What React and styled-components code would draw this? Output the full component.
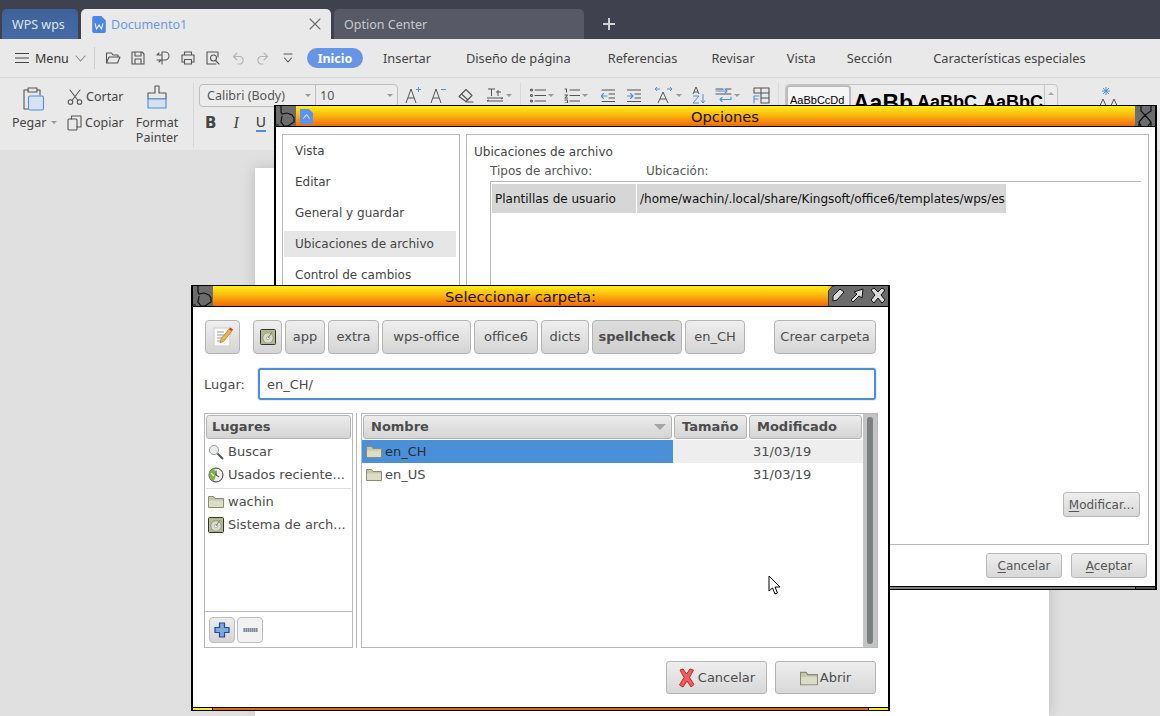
import React from "react";
import styled, { createGlobalStyle } from "styled-components";

const UI = `"Noto Sans", "DejaVu Sans", sans-serif`;
const GTK = `"DejaVu Sans", sans-serif`;

const Global = createGlobalStyle`
  html, body { margin: 0; padding: 0; background: #e0e0e0; }
  body { width: 1160px; height: 716px; overflow: hidden; font-family: ${GTK}; }
  * { box-sizing: border-box; }
`;

const Desktop = styled.div`
  position: relative; width: 1160px; height: 716px; overflow: hidden;
  display: flex; flex-direction: column; background: #e0e0e0;
`;

/* ---------- tab bar ---------- */
const TabBar = styled.div`
  height: 39px; flex: none; background: #3f424e; display: flex; align-items: flex-end;
  padding-left: 2px; gap: 3px; font-family: ${UI}; font-size: 12.5px;
`;
const Tab = styled.div`
  height: 30px; width: ${p => p.$w}px; border-radius: 5px 5px 0 0; display: flex; align-items: center;
  padding: 0 ${p => p.$pad || 10}px; gap: 5px; flex: none;
  background: ${p => p.$bg}; color: ${p => p.$color};
`;
const TabClose = styled.span`margin-left: auto; display: flex; margin-right: -1px;`;
const NewTab = styled.div`margin: 0 0 7px 15px; height: 16px; display: flex; align-items: center;`;

/* ---------- menu row ---------- */
const MenuRow = styled.div`
  height: 39px; flex: none; background: #e9e9e9; border-bottom: 1px solid #dcdcdc;
  display: flex; align-items: center; padding-left: 15px; font-family: ${UI}; font-size: 12.8px; color: #444;
`;
const MenuLabel = styled.span`margin-left: 6px; color: #333; width: 34px; font-size: 12.5px;`;
const ChevronSlot = styled.span`display: flex; margin-left: 6px;`;
const VSep = styled.div`
  width: 1px; height: ${p => p.$h}px; background: #cfcfcf; flex: none; margin: 0 ${p => p.$mr ?? 10}px 0 ${p => p.$ml ?? 8}px;
`;
const QuickIcon = styled.span`display: flex; width: 16px; justify-content: center; margin-right: ${p => p.$mr ?? 9}px; flex: none;`;
const Pill = styled.div`
  width: 56px; height: 20px; border-radius: 10px; background: #6695e6; color: #fff; font-weight: 700; font-size: 12.5px;
  display: flex; align-items: center; justify-content: center; margin: 0 20px 0 ${p => p.$ml}px; flex: none;
`;
const MenuTab = styled.span`margin-right: ${p => p.$mr}px; white-space: nowrap; flex: none;`;

/* ---------- ribbon ---------- */
const Ribbon = styled.div`
  height: 72px; flex: none; background: #e9e9e9; display: flex; align-items: flex-start;
  padding: 6px 0 0 0; font-family: ${UI}; font-size: 12.5px; color: #444;
`;
const PasteGroup = styled.div`
  width: 67px; padding-left: 12px; display: flex; flex-direction: column; align-items: flex-start; flex: none;
`;
const PasteIcon = styled.div`margin: 2px 0 0 9px; height: 26px;`;
const PasteLabel = styled.div`display: flex; align-items: center; gap: 5px; margin-top: 2px;`;
const Caret = styled.span`
  width: 0; height: 0; border-left: 3px solid transparent; border-right: 3px solid transparent;
  border-top: 3px solid #999; flex: none;
`;
const ClipGroup = styled.div`
  width: 68px; display: flex; flex-direction: column; gap: 9px; padding-top: 4px; flex: none;
`;
const ClipRow = styled.div`display: flex; align-items: center; gap: 3px; height: 17px;`;
const PainterGroup = styled.div`
  width: 44px; display: flex; flex-direction: column; align-items: center; line-height: 15px; text-align: center; flex: none;
`;
const PainterIcon = styled.div`height: 30px; margin-top: 1px;`;
const RibbonSep = styled.div`
  width: 1px; height: 64px; margin: -1px ${p => p.$mr ?? 5}px 0 ${p => p.$ml ?? 14}px; background: #d8d8d8; flex: none; align-self: flex-start;
`;
const FontGroup = styled.div`display: flex; flex-direction: column; gap: 6px; flex: none;`;
const FontTop = styled.div`display: flex; align-items: flex-start; height: 22px;`;
const Combo = styled.div`
  width: 199px; height: 23px; border: 1px solid #bdbdbd; border-radius: 4px; background: #ececec;
  display: grid; grid-template-columns: 115px 1fr; margin-right: 7px; color: #555;
`;
const ComboPart = styled.div`
  display: flex; align-items: center; justify-content: space-between; padding: 0 4px 0 7px;
  & + & { border-left: 1px solid #bdbdbd; padding-left: 4px; }
`;
const ToolIcon = styled.span`display: flex; align-items: center; gap: 2px; height: 22px; margin-right: ${p => p.$mr ?? 10}px; flex: none;`;
const FormatRow = styled.div`display: flex; align-items: center; gap: 14px; padding-left: 6px; height: 22px; color: #444;`;
const BoldB = styled.span`font: 700 15px ${GTK}; color: #444;`;
const ItalicI = styled.span`font: italic 400 16px "Liberation Serif", serif; color: #444; padding: 0 3px;`;
const UnderU = styled.span`font: 400 14px ${GTK}; color: #444; border-bottom: 2px solid #4d8fe0; line-height: 15px;`;
const ParaGroup = styled.div`display: flex; align-items: center; height: 22px; margin-left: 3px; flex: none;`;
const StylesBox = styled.div`
  width: 273px; height: 46px; border: 1px solid #c5c5c5; border-radius: 4px;
  display: flex; align-items: flex-start; flex: none; background: #ececec; color: #000;
`;
const StyleChip = styled.div`
  width: 65px; height: 40px; background: #f6f6f6; border: 2px solid #bdbdbd; border-radius: 4px; flex: none;
  font: 11px "Liberation Sans", sans-serif; padding: 7px 0 0 2px; white-space: nowrap;
`;
const StyleBig = styled.div`
  flex: none; font: 700 ${p => p.$s}px "Liberation Sans", sans-serif; margin: ${p => p.$t}px 0 0 ${p => p.$l}px;
  width: ${p => p.$w}px; white-space: nowrap; line-height: 1.1;
`;
const StyleScroll = styled.div`
  margin-left: auto; width: 13px; height: 21px; border-left: 1px solid #c5c5c5; border-bottom: 1px solid #c5c5c5; display: flex; justify-content: center; padding-top: 7px; flex: none;
`;
const UpCaret = styled(Caret)`border-top: 0; border-bottom: 3px solid #aaa;`;
const Sparkle = styled.div`margin: 2px 0 0 40px; flex: none;`;

/* ---------- document canvas ---------- */
const Canvas = styled.div`flex: 1; display: flex; padding: 18px 0 0 255px; background: #e0e0e0; min-height: 0;`;
const Page = styled.div`width: 794px; background: #fff; box-shadow: 0 0 14px rgba(0,0,0,.16);`;

/* ---------- window decorations ---------- */
const Win = styled.div`
  position: absolute; left: ${p => p.$x}px; top: ${p => p.$y}px; width: ${p => p.$w}px; height: ${p => p.$h}px;
  background: #fff; border: 1px solid #000; border-left-width: 2px; display: flex; flex-direction: column;
  border-right-width: 2px; font-family: ${GTK}; color: #4c4c4c; font-size: 13px;
`;
const TitleBar = styled.div`
  height: 21px; flex: none; border-bottom: 1px solid #000;
  background: linear-gradient(#fff018 0%, #fbb80f 45%, #f06a0a 100%);
  display: flex; align-items: center; position: relative; color: #201000; font-size: 14.7px;
`;
const TitleText = styled.div`
  position: absolute; inset: 0; display: flex; align-items: center; justify-content: center;
  padding-left: ${p => p.$pl || 0}px; padding-right: ${p => p.$pr || 0}px; padding-top: 1px;
`;
const Deco = styled.div`
  width: ${p => p.$w}px; height: 20px; background: #6c6c6c; flex: none; display: flex; position: relative;
  margin-left: ${p => (p.$right ? "auto" : "0")};
`;
const AppBadge = styled.span`margin-left: 4px; display: flex; position: relative;`;
const WinBottom = styled.div`
  height: 3px; flex: none; border-top: 1px solid #000; background: ${p => p.$bg};
  display: flex; justify-content: space-between;
`;
const BottomCap = styled.div`width: 20px; height: 2px; background: ${p => p.$bg}; border-right: ${p => p.$r ? "1px solid #000" : "none"}; border-left: ${p => p.$r ? "none" : "1px solid #000"};`;

/* ---------- Opciones window ---------- */
const OptBody = styled.div`flex: 1; display: flex; flex-direction: column; padding: 7px 6px 0 6px; min-height: 0;`;
const OptMain = styled.div`height: 411px; display: grid; grid-template-columns: 178px 1fr; gap: 6px; flex: none;`;
const OptList = styled.div`border: 1px solid #b8b8b8; padding: 3px 1px 0; display: flex; flex-direction: column; gap: 5px; font-size: 12px;`;
const OptItem = styled.div`
  height: 26px; flex: none; display: flex; align-items: center; padding-left: 11px; margin-right: 2px; color: #444;
  background: ${p => (p.$on ? "#e6e6e6" : "transparent")};
`;
const OptPane = styled.div`border: 1px solid #b8b8b8; padding: 9px 7px 0 7px; display: flex; flex-direction: column; font-size: 12px; color: #444;`;
const OptHeading = styled.div`height: 16px; line-height: 16px;`;
const OptTable = styled.div`margin-left: 16px; flex: 1; display: flex; flex-direction: column;`;
const OptHead = styled.div`
  display: grid; grid-template-columns: 156px 1fr; height: 22px; padding-top: 4px; line-height: 14px; border-bottom: 1px solid #b8b8b8; color: #555;
  flex: none;
`;
const OptRows = styled.div`flex: 1; border-left: 1px solid #b8b8b8; padding: 2px 0 0 1px; display: flex; flex-direction: column;`;
const OptRow = styled.div`display: flex; gap: 1px; height: 29px; color: #111;`;
const OptCell = styled.div`
  width: ${p => p.$w}px; background: #d6d6d6; display: flex; align-items: center; padding-left: ${p => p.$p}px; white-space: nowrap; overflow: hidden;
`;
const OptModify = styled.div`margin: auto 1px 27px auto;`;
const OptFooter = styled.div`display: flex; justify-content: flex-end; gap: 9px; padding: 8px 2px 0 0;`;
const SmallBtn = styled.div`
  width: ${p => p.$w}px; height: 25px; border: 1px solid #b8b8b8; border-radius: 3px; font-size: 12px; color: #555;
  background: linear-gradient(#eeeeee, #d8d8d8); display: flex; align-items: center; justify-content: center;
  u { text-underline-offset: 2px; }
`;

/* ---------- select folder dialog ---------- */
const DlgBody = styled.div`flex: 1; display: flex; flex-direction: column; padding: 13px 12px 0 12px; min-height: 0;`;
const PathBar = styled.div`display: flex; height: 34px; flex: none;`;
const GBtn = styled.div`
  width: ${p => p.$w}px; height: 34px; flex: none; margin-right: ${p => p.$mr ?? 3}px;
  border: 1px solid #b4b4b4; border-radius: 4px; display: flex; align-items: center; justify-content: center; padding-bottom: 1px;
  background: ${p => (p.$active ? "linear-gradient(#dcdcdc,#cfcfcf)" : "linear-gradient(#efefef,#d4d4d4)")};
  font-weight: ${p => (p.$active ? 700 : 400)}; color: #4c4c4c;
`;
const PlaceRow = styled.div`display: flex; align-items: center; margin-top: 14px; height: 32px; flex: none;`;
const PlaceLabel = styled.div`width: 53px; margin-left: -1px; margin-right: 1px;`;
const PlaceInput = styled.div`
  width: 618px; height: 32px; border: 2px solid #4a90d9; border-radius: 3px; background: #fff; display: flex; align-items: center; padding-left: 7px; box-shadow: 0 0 0 1px #e8edf3;
`;
const Paned = styled.div`display: flex; margin: 13px 0 0 -1px; height: 235px; flex: none;`;
const Places = styled.div`width: 149px; border: 1px solid #b8b8b8; display: flex; flex-direction: column; padding: 1px; flex: none;`;
const Gutter = styled.div`width: 8px; flex: none; position: relative; &::after { content: ""; position: absolute; left: 3px; top: 0; bottom: 0; width: 1px; background: #b8b8b8; }`;
const Files = styled.div`
  width: 517px; border: 1px solid #b8b8b8; padding-top: 1px; display: grid; grid-template-columns: 1fr 14px; flex: none; min-height: 0;
`;
const ColHeadBtn = styled.div`
  height: 24px; flex: ${p => (p.$w ? `0 0 ${p.$w}px` : "1")}; border: 1px solid #b4b4b4; border-radius: 3px;
  background: linear-gradient(#ececec,#d4d4d4); font-weight: 700; display: flex; align-items: center; justify-content: space-between;
  padding: 0 7px 1px ${p => p.$pl ?? 7}px; color: #4c4c4c;
`;
const PlacesHead = styled(ColHeadBtn)`flex: 0 0 24px;`;
const PlaceRowItem = styled.div`display: flex; align-items: center; height: 23px; gap: 4px; padding-left: 2px; white-space: nowrap; overflow: hidden;`;
const PlaceDivider = styled.div`height: 1px; background: #dedede; margin: 2px 0 0; flex: none;`;
const PlaceList = styled.div`display: flex; flex-direction: column; margin-top: 1px; flex: 1;`;
const PlaceGroup = styled.div`margin-top: ${p => p.$t || 0}px; flex: none;`;
const PlaceTools = styled.div`
  height: 36px; flex: none; border-top: 1px solid #b8b8b8; margin: 0 -1px -1px; display: flex; align-items: center; gap: 2px; padding-left: 4px;
`;
const MiniBtn = styled.div`
  width: 26px; height: 26px; border: 1px solid #bcbcbc; border-radius: 4px; display: flex; align-items: center; justify-content: center;
  background: ${p => (p.$flat ? "#f2f2f2" : "linear-gradient(#ececec,#d4d4d4)")};
`;
const FileTable = styled.div`display: flex; flex-direction: column; min-width: 0;`;
const FileHead = styled.div`display: flex; gap: 2px; padding: 0 1px; height: 25px; flex: none;`;
const FileRow = styled.div`
  display: grid; grid-template-columns: 311px 1fr; height: 23px; flex: none; background: ${p => (p.$sel ? "#eeeeee" : "#fff")};
`;
const FileName = styled.div`
  display: flex; align-items: center; gap: 3px; padding-left: 4px; background: ${p => (p.$sel ? "#4a90d9" : "transparent")}; color: ${p => (p.$sel ? "#2d2d2d" : "#4c4c4c")};
`;
const FileDate = styled.div`display: flex; align-items: center; padding-left: 80px;`;
const SortArrow = styled.span`width: 0; height: 0; border-left: 6px solid transparent; border-right: 6px solid transparent; border-top: 6px solid #a5a5a5; margin-right: -2px;`;
const Trough = styled.div`background: #c4c4c4; padding: 3px 4px; margin-top: -1px;`;
const Thumb = styled.div`height: 100%; width: 6px; border-radius: 3px; background: #7b7f7f;`;
const DlgFooter = styled.div`display: flex; justify-content: flex-end; gap: 8px; padding-top: 13px; flex: none;`;
const BigBtn = styled.div`
  width: 101px; height: 33px; border: 1px solid #b4b4b4; border-radius: 3px; background: linear-gradient(#eeeeee,#d8d8d8);
  display: flex; align-items: center; justify-content: center; gap: ${p => p.$gap}px; color: #4c4c4c;
`;
const Cursor = styled.div`position: absolute; left: 768px; top: 575px; display: flex;`;

/* ---------- icons ---------- */
const B = "#4d8fe0";
const S = ({ w = 16, h = 16, children, sw = 1.1, c = "#555" }) => (
  <svg width={w} height={h} viewBox={`0 0 ${w} ${h}`} fill="none" stroke={c} strokeWidth={sw} strokeLinecap="round" strokeLinejoin="round">{children}</svg>
);
const Ico = {
  Word: () => (<svg width="14" height="17" viewBox="0 0 12 15"><path d="M1.500 0H8l4 4v9.500a1.500 1.500 0 0 1-1.500 1.500h-9A1.500 1.500 0 0 1 0 13.500v-12A1.500 1.500 0 0 1 1.500 0z" fill="#4a86ea"/><path d="M2.500 6.500l1.300 5 2.200-3.500 2.200 3.500 1.300-5" fill="none" stroke="#fff" strokeWidth=".9"/></svg>),
  WordChev: () => (<svg width="13" height="15" viewBox="0 0 13 15"><path d="M0 0h9l4 4v11H0z" fill="#5b93f2"/><path d="M3.500 9.500L6.500 5.500l3 4" fill="none" stroke="#fff" strokeWidth="1"/></svg>),
  Close: () => (<S w={12} h={12} c="#6a6a6a"><path d="M1 1l10 10M11 1L1 11"/></S>),
  Plus: () => (<S w={14} h={14} c="#cfd0d4" sw={2}><path d="M7 1v12M1 7h12" strokeLinecap="butt"/></S>),
  Burger: () => (<S w={14} h={12} c="#444"><path d="M0 1.500h14M0 6h14M0 10.500h14"/></S>),
  Chevron: () => (<S w={11} h={7} c="#888"><path d="M1 1l4.500 5L10 1"/></S>),
  Open: () => (<S><path d="M1.500 13V3h5l1.500 2h5v2M1.500 13l2.500-6h11l-2.500 6z"/></S>),
  Save: () => (<S><path d="M2 2h10l2 2v10H2zM5 2v4h6V2M5 14V9h6v5"/></S>),
  Share: () => (<S><path d="M7 14V2h3a4 4 0 0 1 0 8H7M2 5h4M2 5l2-2M2 10h4M6 10l-2 2"/></S>),
  Print: () => (<S><path d="M4.500 5V2h7v3M4.500 12H2V5h12v7h-2.500M4.500 9.500h7V14h-7z"/></S>),
  Preview: () => (<S><path d="M11 14H2V2h11v5"/><circle cx="8.500" cy="8" r="3"/><path d="M10.500 10.500L14 14"/></S>),
  Undo: () => (<S w={14} h={14} c="#b4b4b4"><path d="M1.500 5.500h7a4 4 0 0 1 0 7.500H6M1.500 5.500L5 2M1.500 5.500L5 9"/></S>),
  Redo: () => (<S w={14} h={14} c="#b4b4b4"><path d="M12.500 5.500h-7a4 4 0 0 0 0 7.500H8M12.500 5.500L9 2M12.500 5.500L9 9"/></S>),
  More: () => (<S w={12} h={12} c="#555"><path d="M2 2h8M2.500 6l3.500 4 3.500-4"/></S>),
  Paste: () => (<S w={24} h={26} c="#555"><path d="M7 4H3v19h4"/><path d="M7 2h9v4H7z"/><path d="M16 4h3v5"/><rect x="7.500" y="10" width="15" height="14" rx="1.500" stroke={B} fill="#d6e2f2"/></S>),
  Scissors: () => (<S w={16} h={16} c="#555"><circle cx="3.500" cy="13" r="2.300"/><circle cx="12.500" cy="13" r="2.300"/><path d="M5 11.500L13 1M11 11.500L3 1"/></S>),
  Copy: () => (<S w={15} h={16} c="#555"><rect x="1" y="4" width="9" height="11" rx="1"/><path d="M4.500 4V1H14v11h-4"/></S>),
  Painter: () => (<S w={22} h={24} c="#555"><path d="M9 1h4v7h7v6H2V8h7z"/><rect x="2" y="14" width="18" height="9" stroke={B} fill="#d6e2f2"/></S>),
  APlus: ({ minus }) => (<svg width="17" height="18" viewBox="0 0 17 18" fill="none" stroke="#555"><path d="M1 17L6 3l5 14M3 12h6"/><path d={minus ? "M11 3.500h5" : "M13.500 1v5M11 3.500h5"} stroke={B}/></svg>),
  Eraser: () => (<S w={16} h={16} c="#555"><path d="M1 9.500L8 2.500l6 6-6 6z"/><path d="M3.500 7L10 13"/><path d="M8 15h7"/></S>),
  TextAdj: () => (<svg width="18" height="16" viewBox="0 0 18 16" fill="none" stroke="#555"><path d="M2 2h7M5.500 2v7M12 3v6M10 5h5M1 11h16M1 14h16M15 12l2-1M3 13l-2 1"/></svg>),
  Bullets: () => (<S w={16} h={15} c="#555"><path d="M5 2h11M5 7.500h11M5 13h11"/><circle cx="1.500" cy="2" r="1"/><circle cx="1.500" cy="7.500" r="1"/><circle cx="1.500" cy="13" r="1"/></S>),
  Numbers: () => (<S w={16} h={15} c="#555"><path d="M6 2h10M6 7.500h10M6 13h10M1 1h1.500v3M1 7h2.500L1 10h2.500M1 12h2.500v3H1"/></S>),
  Outdent: () => (<S w={14} h={13} c="#555"><path d="M1 1h13M8 5h6M8 9h6M1 12.500h13"/><path d="M6 7H0M2.500 4.500L0 7l2.500 2.500" stroke={B}/></S>),
  Indent: () => (<S w={14} h={13} c="#555"><path d="M0 1h14M8 5h6M8 9h6M0 12.500h14"/><path d="M0 7h6M3.500 4.500L6 7 3.500 9.500" stroke={B}/></S>),
  Spacing: () => (<svg width="20" height="18" viewBox="0 0 20 18" fill="none" stroke="#555"><path d="M4 17L9 6l5 11M6 13h6"/><path d="M1 3h5M1 3l2-2M1 3l2 2M18 3h-5M18 3l-2-2M18 3l-2 2" stroke={B}/></svg>),
  Sort: () => (<svg width="14" height="18" viewBox="0 0 14 18" fill="none"><path d="M1 8l3-7 3 7M2 6h4" stroke="#555"/><path d="M1 10h6l-6 7h6" stroke={B}/><path d="M11 8v9M9 14.500l2 2.500 2-2.500" stroke={B}/></svg>),
  Lines: () => (<S w={17} h={17} c="#555"><path d="M1 2h7M11 2h5M1 7h15"/><path d="M1 4h9M10 2l2 2-2 2M16 10v2.500H5M5 12.500l2-2M5 12.500l2 2" stroke={B}/></S>),
  Borders: () => (<S w={17} h={17} c="#555"><path d="M1 6V1h15v15H8M8 1v15M1 6h15M8 11h8"/><path d="M1 16V9h5M1 12h4" stroke={B}/></S>),
  Sparkle: () => (<svg width="22" height="26" viewBox="0 0 22 26" fill="none" stroke="#555"><path d="M0 24l5-11 5 11M2 20h6M11 24l5-11 5 11M13 20h6"/><path d="M8 1v8M4 5h8M5 2l6 6M11 2L5 8" stroke={B}/></svg>),
  DecoLeft: () => (<svg width="20" height="20" viewBox="0 0 20 20" fill="none" stroke="#111" strokeWidth="1.200"><path d="M5 0v6l1 2 5-1 5 2 2 3v4l-6 4H8l-3-4 1-6M0 19h3"/></svg>),
  DecoClose: () => (<svg width="20" height="20" viewBox="0 0 20 20" fill="none" stroke="#111" strokeWidth="1.200"><path d="M6 0v5l4 4-6 7v4M16 0v5l-6 4 6 7v4M4 16l2 4M16 16l-3 4"/></svg>),
  DecoBtn: ({ d }) => (<svg width="20" height="20" viewBox="0 0 20 20"><path d={d} fill="#dcdcdc" stroke="#111" strokeWidth="1"/></svg>),
  DecoNotch: () => (<svg width="6" height="20" viewBox="0 0 6 20" style={{ position: "absolute", left: 0, top: 0 }}><path d="M0 20V5l4-5h2" fill="none" stroke="#111"/><path d="M0 0h4L0 5z" fill="#fdbf10"/></svg>),
  Note: () => (<svg width="22" height="22" viewBox="0 0 22 22"><rect x="2" y="2" width="16" height="18" fill="#fafafa" stroke="#ccc"/><path d="M5 6h7M5 9h8M5 12h5M5 15h4" stroke="#999"/><path d="M8 17l1-4 8-10 3 2-8 10z" fill="#eab54c" stroke="#b07a20" strokeWidth=".7"/><path d="M17 3l1.500-1.500 2.500 2L20 5z" fill="#d8342f"/></svg>),
  Disk: () => (<svg width="16" height="16" viewBox="0 0 16 16"><rect x=".5" y=".5" width="15" height="15" rx="1" fill="#b3b98b" stroke="#333"/><circle cx="8" cy="9" r="5.200" fill="#d9dad0" stroke="#888" strokeWidth=".7"/><circle cx="8" cy="9" r="1.600" fill="#f4f4f4" stroke="#888" strokeWidth=".5"/><path d="M8 9l4-6" stroke="#6c9a2f" strokeWidth="1"/></svg>),
  Search: () => (<svg width="16" height="16" viewBox="0 0 16 16"><circle cx="6" cy="6" r="4.600" fill="#e8ecef" stroke="#9a9a9a"/><path d="M9.500 9.500L15 15" stroke="#555" strokeWidth="2"/></svg>),
  Recent: () => (<svg width="16" height="16" viewBox="0 0 16 16"><circle cx="8" cy="8" r="7" fill="#eee" stroke="#333"/><path d="M1 8a7 7 0 0 1 5-6.700L8 8l-2 6A7 7 0 0 1 1 8z" fill="#7cb63a"/><path d="M8 3.500V8l3 2" stroke="#333" fill="none"/><path d="M3 6l3 3" stroke="#fff" strokeWidth="1.200"/></svg>),
  Folder: ({ s = 16, h = 13 }) => (<svg width={s} height={h} viewBox="0 0 16 13"><path d="M.5 12.500V1.500h5l1.500 2h8.500v9z" fill="#c5c7ac" stroke="#8a8c76"/><path d="M1 5.500h14v6.500H1z" fill="#dcddc6"/></svg>),
  PlusBlue: () => (<svg width="16" height="16" viewBox="0 0 16 16"><path d="M5.500 1h5v4.500H15v5h-4.500V15h-5v-4.500H1v-5h4.500z" fill="#7fa8dc" stroke="#1f4a96" strokeWidth="1.200"/></svg>),
  MinusGrey: () => (<svg width="15" height="4" viewBox="0 0 15 4"><rect width="15" height="4" fill="#7f8898"/><path d="M0 1h15M0 3h15" stroke="#dfe3ea" strokeDasharray="1 1"/></svg>),
  RedX: () => (<svg width="17" height="20" viewBox="0 0 17 20"><path d="M2 2l3-1 3.500 5L12 1l3.500 1-4 7.500 4.500 7-3 2.500-4-6-4 6-3.500-2 4.500-7.500z" fill="#ef5b5f" stroke="#c22b30"/></svg>),
  Arrow: () => (<svg width="13" height="20" viewBox="0 0 13 20"><path d="M1 1v15l3.500-3 2.500 6 2.500-1-2.500-6h5z" fill="#fff" stroke="#000" strokeWidth="1"/></svg>),
};

const d1 = "M5 15v-5l7-7 4 3-7 8z";
const d2 = "M5 16l-2-2 6-6-3-2 9-3-1 9-3-2z";
const d3 = "M3 4l3-2 4 4 4-4 3 2-4 5 4 5-3 3-4-5-4 5-3-3 4-5z";

export default function App() {
  return (
    <Desktop>
      <Global />
      <TabBar>
        <Tab $w={76} $bg="linear-gradient(#40629a,#446aa5)" $color="#dfe5f0">WPS wps</Tab>
        <Tab $w={250} $bg="#e9e9e9" $color="#6c97ea" $pad={11}><Ico.Word />Documento1<TabClose><Ico.Close /></TabClose></Tab>
        <Tab $w={250} $bg="#575a66" $color="#c6c7cc">Option Center</Tab>
        <NewTab><Ico.Plus /></NewTab>
      </TabBar>

      <MenuRow>
        <Ico.Burger />
        <MenuLabel>Menu</MenuLabel>
        <ChevronSlot><Ico.Chevron /></ChevronSlot>
        <VSep $h={22} />
        <QuickIcon><Ico.Open /></QuickIcon>
        <QuickIcon><Ico.Save /></QuickIcon>
        <QuickIcon><Ico.Share /></QuickIcon>
        <QuickIcon><Ico.Print /></QuickIcon>
        <QuickIcon $mr={10}><Ico.Preview /></QuickIcon>
        <QuickIcon $mr={7}><Ico.Undo /></QuickIcon>
        <QuickIcon $mr={10}><Ico.Redo /></QuickIcon>
        <QuickIcon $mr={0}><Ico.More /></QuickIcon>
        <Pill $ml={11}>Inicio</Pill>
        <MenuTab $mr={35}>Insertar</MenuTab>
        <MenuTab $mr={37}>Diseño de página</MenuTab>
        <MenuTab $mr={34}>Referencias</MenuTab>
        <MenuTab $mr={32}>Revisar</MenuTab>
        <MenuTab $mr={31}>Vista</MenuTab>
        <MenuTab $mr={41}>Sección</MenuTab>
        <MenuTab $mr={0}>Características especiales</MenuTab>
      </MenuRow>

      <Ribbon>
        <PasteGroup>
          <PasteIcon><Ico.Paste /></PasteIcon>
          <PasteLabel>Pegar<Caret /></PasteLabel>
        </PasteGroup>
        <ClipGroup>
          <ClipRow><Ico.Scissors />Cortar</ClipRow>
          <ClipRow><Ico.Copy />Copiar</ClipRow>
        </ClipGroup>
        <PainterGroup>
          <PainterIcon><Ico.Painter /></PainterIcon>
          Format<br />Painter
        </PainterGroup>
        <RibbonSep />
        <FontGroup>
          <FontTop>
            <Combo>
              <ComboPart>Calibri (Body)<Caret /></ComboPart>
              <ComboPart>10<Caret /></ComboPart>
            </Combo>
            <ToolIcon $mr={8}><Ico.APlus /></ToolIcon>
            <ToolIcon $mr={11}><Ico.APlus minus /></ToolIcon>
            <ToolIcon $mr={12}><Ico.Eraser /></ToolIcon>
            <ToolIcon $mr={0}><Ico.TextAdj /><Caret /></ToolIcon>
            <RibbonSep $ml={8} $mr={6} />
            <ParaGroup>
              <ToolIcon $mr={10}><Ico.Bullets /><Caret /></ToolIcon>
              <ToolIcon $mr={13}><Ico.Numbers /><Caret /></ToolIcon>
              <ToolIcon $mr={12}><Ico.Outdent /></ToolIcon>
              <ToolIcon $mr={13}><Ico.Indent /></ToolIcon>
              <ToolIcon $mr={10}><Ico.Spacing /><Caret /></ToolIcon>
              <ToolIcon $mr={9}><Ico.Sort /></ToolIcon>
              <ToolIcon $mr={13}><Ico.Lines /><Caret /></ToolIcon>
              <ToolIcon $mr={0}><Ico.Borders /></ToolIcon>
            </ParaGroup>
            <RibbonSep $ml={8} $mr={6} />
            <StylesBox>
              <StyleChip>AaBbCcDd</StyleChip>
              <StyleBig $s={23} $t={6} $l={2} $w={62}>AaBb</StyleBig>
              <StyleBig $s={18} $t={8} $l={2} $w={61}>AaBbC</StyleBig>
              <StyleBig $s={18} $t={8} $l={5} $w={61}>AaBbC</StyleBig>
              <StyleScroll><UpCaret /></StyleScroll>
            </StylesBox>
            <Sparkle><Ico.Sparkle /></Sparkle>
          </FontTop>
          <FormatRow>
            <BoldB>B</BoldB>
            <ItalicI>I</ItalicI>
            <UnderU>U</UnderU>
          </FormatRow>
        </FontGroup>
      </Ribbon>

      <Canvas><Page /></Canvas>

      <Win $x={274} $y={105} $w={883} $h={485}>
        <TitleBar>
          <Deco $w={20}><Ico.DecoLeft /></Deco>
          <AppBadge><Ico.WordChev /></AppBadge>
          <TitleText $pl={19}>Opciones</TitleText>
          <Deco $w={20} $right><Ico.DecoClose /></Deco>
        </TitleBar>
        <OptBody>
          <OptMain>
            <OptList>
              <OptItem>Vista</OptItem>
              <OptItem>Editar</OptItem>
              <OptItem>General y guardar</OptItem>
              <OptItem $on>Ubicaciones de archivo</OptItem>
              <OptItem>Control de cambios</OptItem>
            </OptList>
            <OptPane>
              <OptHeading>Ubicaciones de archivo</OptHeading>
              <OptTable>
                <OptHead><span>Tipos de archivo:</span><span>Ubicación:</span></OptHead>
                <OptRows>
                  <OptRow>
                    <OptCell $w={144} $p={3}>Plantillas de usuario</OptCell>
                    <OptCell $w={369} $p={3}>/home/wachin/.local/share/Kingsoft/office6/templates/wps/es</OptCell>
                  </OptRow>
                  <OptModify><SmallBtn $w={77}><span><u>M</u>odificar...</span></SmallBtn></OptModify>
                </OptRows>
              </OptTable>
            </OptPane>
          </OptMain>
          <OptFooter>
            <SmallBtn $w={76}><span><u>C</u>ancelar</span></SmallBtn>
            <SmallBtn $w={76}><span><u>A</u>ceptar</span></SmallBtn>
          </OptFooter>
        </OptBody>
        <WinBottom $bg="#808080"><span /><BottomCap $bg="#555" /></WinBottom>
      </Win>

      <Win $x={191} $y={285} $w={699} $h={426}>
        <TitleBar>
          <Deco $w={20}><Ico.DecoLeft /></Deco>
          <TitleText $pr={40}>Seleccionar carpeta:</TitleText>
          <Deco $w={60} $right>
            <Ico.DecoNotch />
            <Ico.DecoBtn d={d1} /><Ico.DecoBtn d={d2} /><Ico.DecoBtn d={d3} />
          </Deco>
        </TitleBar>
        <DlgBody>
          <PathBar>
            <GBtn $w={35} $mr={13}><Ico.Note /></GBtn>
            <GBtn $w={29}><Ico.Disk /></GBtn>
            <GBtn $w={40}>app</GBtn>
            <GBtn $w={51}>extra</GBtn>
            <GBtn $w={89}>wps-office</GBtn>
            <GBtn $w={64}>office6</GBtn>
            <GBtn $w={48}>dicts</GBtn>
            <GBtn $w={90} $active>spellcheck</GBtn>
            <GBtn $w={60} $mr={29}>en_CH</GBtn>
            <GBtn $w={102} $mr={0}>Crear carpeta</GBtn>
          </PathBar>
          <PlaceRow>
            <PlaceLabel>Lugar:</PlaceLabel>
            <PlaceInput>en_CH/</PlaceInput>
          </PlaceRow>
          <Paned>
            <Places>
              <PlacesHead $pl={5}>Lugares</PlacesHead>
              <PlaceList>
                <PlaceGroup>
                  <PlaceRowItem><Ico.Search />Buscar</PlaceRowItem>
                  <PlaceRowItem><Ico.Recent />Usados reciente...</PlaceRowItem>
                </PlaceGroup>
                <PlaceDivider />
                <PlaceGroup $t={1}>
                  <PlaceRowItem><Ico.Folder />wachin</PlaceRowItem>
                  <PlaceRowItem><Ico.Disk />Sistema de arch...</PlaceRowItem>
                </PlaceGroup>
              </PlaceList>
              <PlaceTools>
                <MiniBtn><Ico.PlusBlue /></MiniBtn>
                <MiniBtn $flat><Ico.MinusGrey /></MiniBtn>
              </PlaceTools>
            </Places>
            <Gutter />
            <Files>
              <FileTable>
                <FileHead>
                  <ColHeadBtn>Nombre<SortArrow /></ColHeadBtn>
                  <ColHeadBtn $w={73}>Tamaño</ColHeadBtn>
                  <ColHeadBtn $w={113}>Modificado</ColHeadBtn>
                </FileHead>
                <FileRow $sel>
                  <FileName $sel><Ico.Folder />en_CH</FileName>
                  <FileDate>31/03/19</FileDate>
                </FileRow>
                <FileRow>
                  <FileName><Ico.Folder />en_US</FileName>
                  <FileDate>31/03/19</FileDate>
                </FileRow>
              </FileTable>
              <Trough><Thumb /></Trough>
            </Files>
          </Paned>
          <DlgFooter>
            <BigBtn $gap={3}><Ico.RedX />Cancelar</BigBtn>
            <BigBtn $gap={2}><Ico.Folder s={18} h={16} />Abrir</BigBtn>
          </DlgFooter>
        </DlgBody>
        <WinBottom $bg="#e8680c"><BottomCap $bg="#ffe81c" $r /><BottomCap $bg="#ffe81c" /></WinBottom>
      </Win>
      <Cursor><Ico.Arrow /></Cursor>
    </Desktop>
  );
}
